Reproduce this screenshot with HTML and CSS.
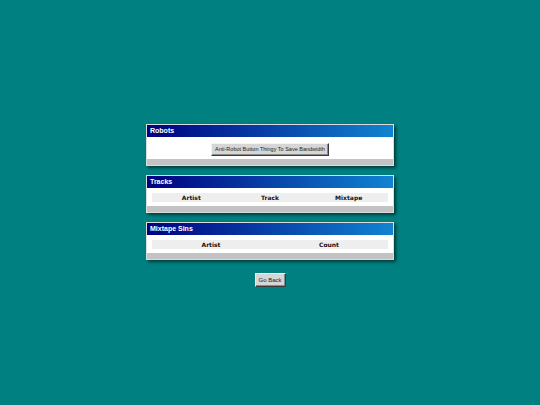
FILE: index.html
```html
<!DOCTYPE html>
<html>
<head>
<meta charset="utf-8">
<title>Robots</title>
<link rel="stylesheet" href="styles.css">
</head>
<body>
<main class="page">
  <section class="panel">
    <div class="panel-title">Robots</div>
    <div class="panel-body panel-body--center">
      <button class="btn btn--robot" type="button">Anti-Robot Button Thingy To Save Bandwidth</button>
    </div>
    <div class="panel-foot"></div>
  </section>

  <section class="panel">
    <div class="panel-title">Tracks</div>
    <div class="panel-body">
      <table class="grid">
        <thead>
          <tr><th>Artist</th><th>Track</th><th>Mixtape</th></tr>
        </thead>
      </table>
    </div>
    <div class="panel-foot"></div>
  </section>

  <section class="panel">
    <div class="panel-title">Mixtape Sins</div>
    <div class="panel-body">
      <table class="grid">
        <thead>
          <tr><th>Artist</th><th>Count</th></tr>
        </thead>
      </table>
    </div>
    <div class="panel-foot"></div>
  </section>

  <button class="btn btn--back" type="button">Go Back</button>
</main>
</body>
</html>
```

FILE: styles.css
```css
html, body {
  margin: 0;
  padding: 0;
  background: #008080;
}

.page {
  display: flex;
  flex-direction: column;
  align-items: center;
  gap: 9px;
  padding-top: 124px;
  font-family: "Liberation Sans", Arial, sans-serif;
}

.panel {
  width: 246px;
  border: 1px solid #dcdcdc;
  background: #ffffff;
  box-shadow: 2px 2px 3px rgba(0, 0, 0, 0.55);
  display: flex;
  flex-direction: column;
}

.panel-title {
  height: 12px;
  line-height: 12px;
  padding-left: 3px;
  background: linear-gradient(to right, #000080, #1084d0);
  color: #ffffff;
  font-weight: bold;
  font-size: 7px;
}

.panel-body {
  padding: 5px 5px 4px;
  background: #ffffff;
}

.panel-body--center {
  display: flex;
  justify-content: center;
  padding-top: 6px;
  padding-bottom: 3px;
}

.panel-foot {
  height: 6px;
  background: #c3c3c3;
}

.grid {
  width: 100%;
  border-collapse: collapse;
  table-layout: fixed;
}

.grid th {
  background: #eeeeee;
  height: 9px;
  padding: 0;
  line-height: 9px;
  font-family: "DejaVu Sans", Verdana, sans-serif;
  font-size: 6px;
  font-weight: bold;
  color: #111111;
  text-align: center;
}

.btn {
  margin: 0;
  font-family: "Liberation Sans", Arial, sans-serif;
  color: #222222;
  background: #d6d6d6;
  border: 1px solid;
  border-color: #f4f4f4 #3a3a3a #3a3a3a #f4f4f4;
  box-shadow: inset -1px -1px 0 #8a8a8a;
  cursor: pointer;
}

.btn--robot {
  height: 13px;
  padding: 0 3px;
  font-size: 5.5px;
  line-height: 11px;
}

.btn--back {
  margin-top: 4px;
  height: 14px;
  width: 31px;
  padding: 0;
  font-size: 6px;
  line-height: 12px;
}
```
